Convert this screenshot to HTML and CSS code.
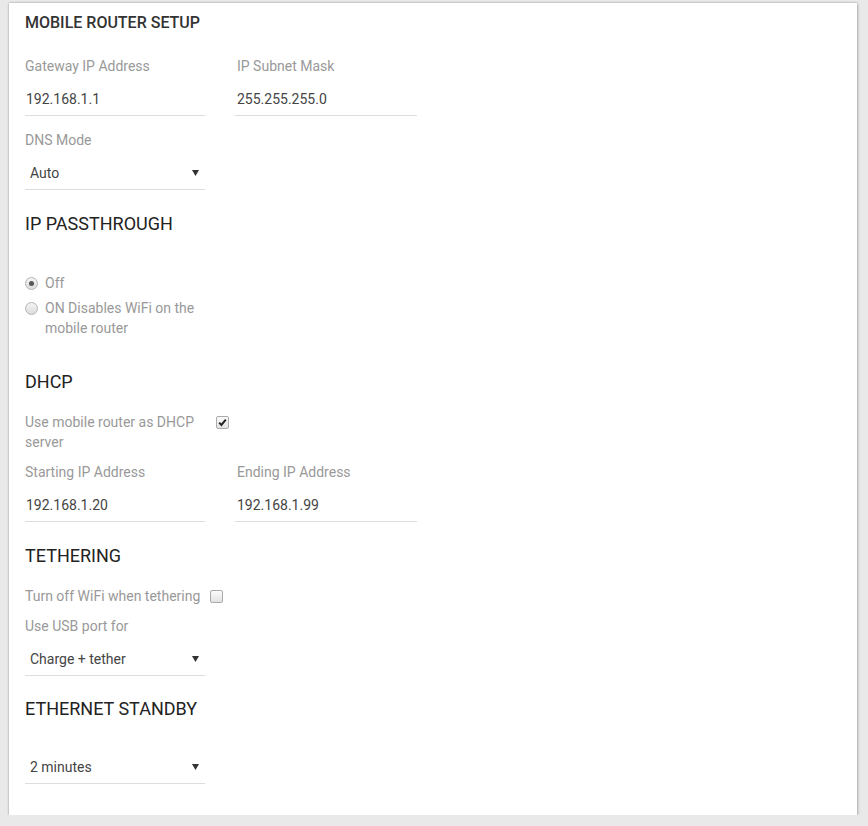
FILE: index.html
```html
<!DOCTYPE html>
<html>
<head>
<meta charset="utf-8">
<link rel="stylesheet" href="styles.css">
</head>
<body>
<div class="card">
  <h1 class="title">MOBILE ROUTER SETUP</h1>

  <div class="row">
    <div class="field">
      <div class="label">Gateway IP Address</div>
      <div class="control">192.168.1.1</div>
    </div>
    <div class="field wide">
      <div class="label">IP Subnet Mask</div>
      <div class="control">255.255.255.0</div>
    </div>
  </div>
  <div class="field">
    <div class="label">DNS Mode</div>
    <div class="control select">Auto<svg class="arrow" width="7" height="6" viewBox="0 0 7 6"><polygon points="0,0 7,0 3.5,6" fill="#333"/></svg></div>
  </div>

  <h2 class="heading">IP PASSTHROUGH</h2>
  <div class="radios">
    <div class="radio-row"><span class="radio checked"></span><span class="radio-text">Off</span></div>
    <div class="radio-row"><span class="radio"></span><span class="radio-text">ON Disables WiFi on the mobile router</span></div>
  </div>

  <h2 class="heading dhcp">DHCP</h2>
  <div class="check-row first">
    <span class="check-label">Use mobile router as DHCP server</span>
    <span class="checkbox checked"><svg width="11" height="11" viewBox="0 0 11 11"><path d="M2.2 5.6 L4.4 7.9 L8.8 2.6" fill="none" stroke="#222" stroke-width="2"/></svg></span>
  </div>
  <div class="row">
    <div class="field">
      <div class="label">Starting IP Address</div>
      <div class="control">192.168.1.20</div>
    </div>
    <div class="field wide">
      <div class="label">Ending IP Address</div>
      <div class="control">192.168.1.99</div>
    </div>
  </div>

  <h2 class="heading after-row">TETHERING</h2>
  <div class="check-row second">
    <span class="check-label">Turn off WiFi when tethering</span>
    <span class="checkbox"></span>
  </div>
  <div class="field">
    <div class="label">Use USB port for</div>
    <div class="control select">Charge + tether<svg class="arrow" width="7" height="6" viewBox="0 0 7 6"><polygon points="0,0 7,0 3.5,6" fill="#333"/></svg></div>
  </div>

  <h2 class="heading ethernet">ETHERNET STANDBY</h2>
  <div class="field standby">
    <div class="control select">2 minutes<svg class="arrow" width="7" height="6" viewBox="0 0 7 6"><polygon points="0,0 7,0 3.5,6" fill="#333"/></svg></div>
  </div>
</div>
</body>
</html>
```

FILE: styles.css
```css
html, body {
  margin: 0;
  padding: 0;
}
body {
  background: #e9e9e9;
  font-family: Roboto, "Liberation Sans", sans-serif;
  font-size: 14px;
  color: #444;
  padding: 3px 0 0 9px;
}
.card {
  width: 848px;
  box-sizing: border-box;
  background: #fff;
  padding: 10px 16px 31px 16px;
  box-shadow: 0 0 2px rgba(0,0,0,0.35), 1px 1px 3px rgba(0,0,0,0.15);
}
.title {
  margin: 0 0 23px 0;
  font-size: 16px;
  font-weight: 500;
  line-height: 20px;
  color: #333;
}
.heading {
  margin: 22px 0 0 0;
  font-size: 18px;
  font-weight: 400;
  line-height: 24px;
  color: #222;
}
.heading.after-row {
  margin-top: 8px;
}
.heading.ethernet {
  margin-top: 21px;
}
.row {
  display: flex;
  gap: 30px;
}
.field {
  width: 180px;
  margin-bottom: 14px;
}
.field.wide {
  width: 182px;
}
.field.wide .label,
.field.wide .control {
  padding-left: 2px;
}
.label {
  line-height: 20px;
  color: #999;
  margin-bottom: 7px;
  white-space: nowrap;
}
.control {
  height: 32px;
  line-height: 32px;
  border-bottom: 1px solid #ddd;
  color: #444;
  padding-left: 1px;
}
.control.select {
  display: flex;
  align-items: center;
  justify-content: space-between;
  padding: 0 6px 0 5px;
}
.arrow {
  display: block;
}
.field:last-child {
  margin-bottom: 0;
}
.radios {
  margin-top: 37px;
  width: 180px;
}
.radio-row {
  display: flex;
  align-items: flex-start;
  line-height: 20px;
  color: #999;
  margin-bottom: 5px;
}
.radio {
  flex: none;
  width: 11px;
  height: 11px;
  border: 1px solid #b5b5b5;
  border-radius: 50%;
  background: linear-gradient(#f4f4f4, #dcdcdc);
  margin: 4px 7px 0 0;
  position: relative;
}
.radio.checked::after {
  content: "";
  position: absolute;
  left: 3px;
  top: 3px;
  width: 5px;
  height: 5px;
  border-radius: 50%;
  background: #555;
}
.heading.dhcp {
  margin-top: 32px;
}
.check-row {
  display: flex;
  align-items: flex-start;
  line-height: 20px;
  color: #999;
  margin-top: 18px;
  margin-bottom: 10px;
}
.check-label {
  max-width: 180px;
}
.check-row.first .check-label {
  width: 180px;
}
.checkbox {
  flex: none;
  width: 11px;
  height: 11px;
  border: 1px solid #aaa;
  border-radius: 2px;
  background: linear-gradient(#fbfbfb, #e2e2e2);
  margin: 4px 0 0 11px;
  display: flex;
  align-items: center;
  justify-content: center;
}
.check-row.second .checkbox {
  margin-left: 10px;
}
.checkbox svg {
  display: block;
}
.standby {
  margin-top: 30px;
}
```
